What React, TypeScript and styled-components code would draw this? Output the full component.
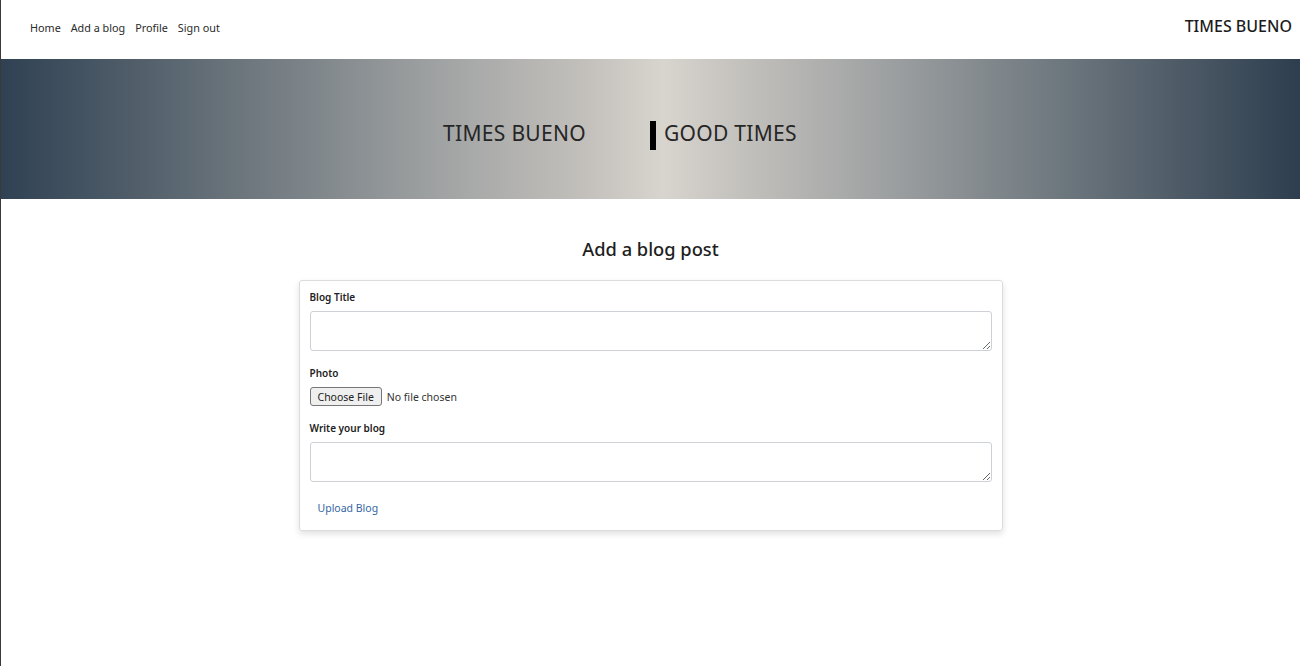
import React from 'react';
import styled, { createGlobalStyle } from 'styled-components';

const GlobalStyle = createGlobalStyle`
    body {
        margin: 0;
        font-family: 'Noto Sans', 'Open Sans', sans-serif;
        color: #222;
        background: #fff;
    }
`;

const Page = styled.div`
    min-height: 666px;
    border-left: 1px solid #3a3a3a;
    box-sizing: border-box;
`;

const NavBar = styled.nav`
    display: flex;
    align-items: center;
    justify-content: space-between;
    height: 59px;
    padding: 0 8px 8px 29px;
    box-sizing: border-box;
`;

const NavLinks = styled.div`
    display: flex;
    gap: 10px;
    padding-top: 4px;
`;

const NavLink = styled.a`
    font-size: 10.8px;
    color: #2a2a2a;
    text-decoration: none;
    cursor: pointer;
`;

const Brand = styled.div`
    font-size: 16px;
    font-weight: 500;
    color: #1c1c1c;
`;

const Banner = styled.header`
    display: flex;
    align-items: center;
    justify-content: center;
    height: 140px;
    box-sizing: border-box;
    padding: 8px 61px 0 0;
    background: linear-gradient(
        to right,
        #2f4153 0%,
        #6a747b 18%,
        #a4a6a6 35%,
        #c3c0bb 45%,
        #d8d4ce 51%,
        #c0beba 58%,
        #9ea1a2 68%,
        #6c767d 82%,
        #2e3e4f 100%
    );
`;

const BannerTitle = styled.h1`
    margin: 0;
    font-size: 21px;
    font-weight: 400;
    color: #262626;
    letter-spacing: 0.3px;
`;

const BannerDivider = styled.span`
    display: block;
    width: 6px;
    height: 29px;
    background: #000;
    margin: 4px 8px 0 64px;
`;

const Main = styled.main`
    display: flex;
    flex-direction: column;
    align-items: center;
    padding-top: 37px;
`;

const Heading = styled.h2`
    margin: 0 0 19px;
    font-size: 18.3px;
    font-weight: 500;
    color: #1e1e1e;
`;

const Card = styled.form`
    display: flex;
    flex-direction: column;
    gap: 16px;
    width: 704px;
    box-sizing: border-box;
    padding: 10px 10px 9px;
    border: 1px solid #dcdcdc;
    border-radius: 3px;
    box-shadow: 0 3px 6px rgba(0, 0, 0, 0.12);
`;

const Field = styled.div`
    display: flex;
    flex-direction: column;
`;

const Label = styled.label`
    font-size: 10px;
    line-height: 13px;
    font-weight: 600;
    color: #222;
    margin-bottom: 7px;
`;

const TextArea = styled.textarea`
    display: block;
    height: 40px;
    box-sizing: border-box;
    border: 1px solid #cdd1d5;
    border-radius: 3px;
    font-family: inherit;
    resize: vertical;
`;

const FileInput = styled.input`
    display: block;
    height: 19px;
    font-family: inherit;
    font-size: 10.5px;
    color: #333;

    &::file-selector-button {
        height: 19px;
        padding: 0 7px;
        margin-right: 5px;
        font-family: inherit;
        font-size: 10.5px;
        color: #222;
        border: 1px solid #767676;
        border-radius: 3px;
        background: #efefef;
    }
`;

const UploadButton = styled.button`
    align-self: flex-start;
    margin-top: -2px;
    background: none;
    border: none;
    padding: 6px 8px;
    font-family: inherit;
    font-size: 10.5px;
    line-height: 13px;
    color: #3466a3;
    cursor: pointer;
`;

const App: React.FC = () => {
    return (
        <>
            <GlobalStyle />
            <Page>
                <NavBar>
                    <NavLinks>
                        <NavLink>Home</NavLink>
                        <NavLink>Add a blog</NavLink>
                        <NavLink>Profile</NavLink>
                        <NavLink>Sign out</NavLink>
                    </NavLinks>
                    <Brand>TIMES BUENO</Brand>
                </NavBar>
                <Banner>
                    <BannerTitle>TIMES BUENO</BannerTitle>
                    <BannerDivider />
                    <BannerTitle>GOOD TIMES</BannerTitle>
                </Banner>
                <Main>
                    <Heading>Add a blog post</Heading>
                    <Card onSubmit={(e) => e.preventDefault()}>
                        <Field>
                            <Label>Blog Title</Label>
                            <TextArea />
                        </Field>
                        <Field>
                            <Label>Photo</Label>
                            <FileInput type="file" />
                        </Field>
                        <Field>
                            <Label>Write your blog</Label>
                            <TextArea />
                        </Field>
                        <UploadButton type="submit">Upload Blog</UploadButton>
                    </Card>
                </Main>
            </Page>
        </>
    );
};

export default App;
